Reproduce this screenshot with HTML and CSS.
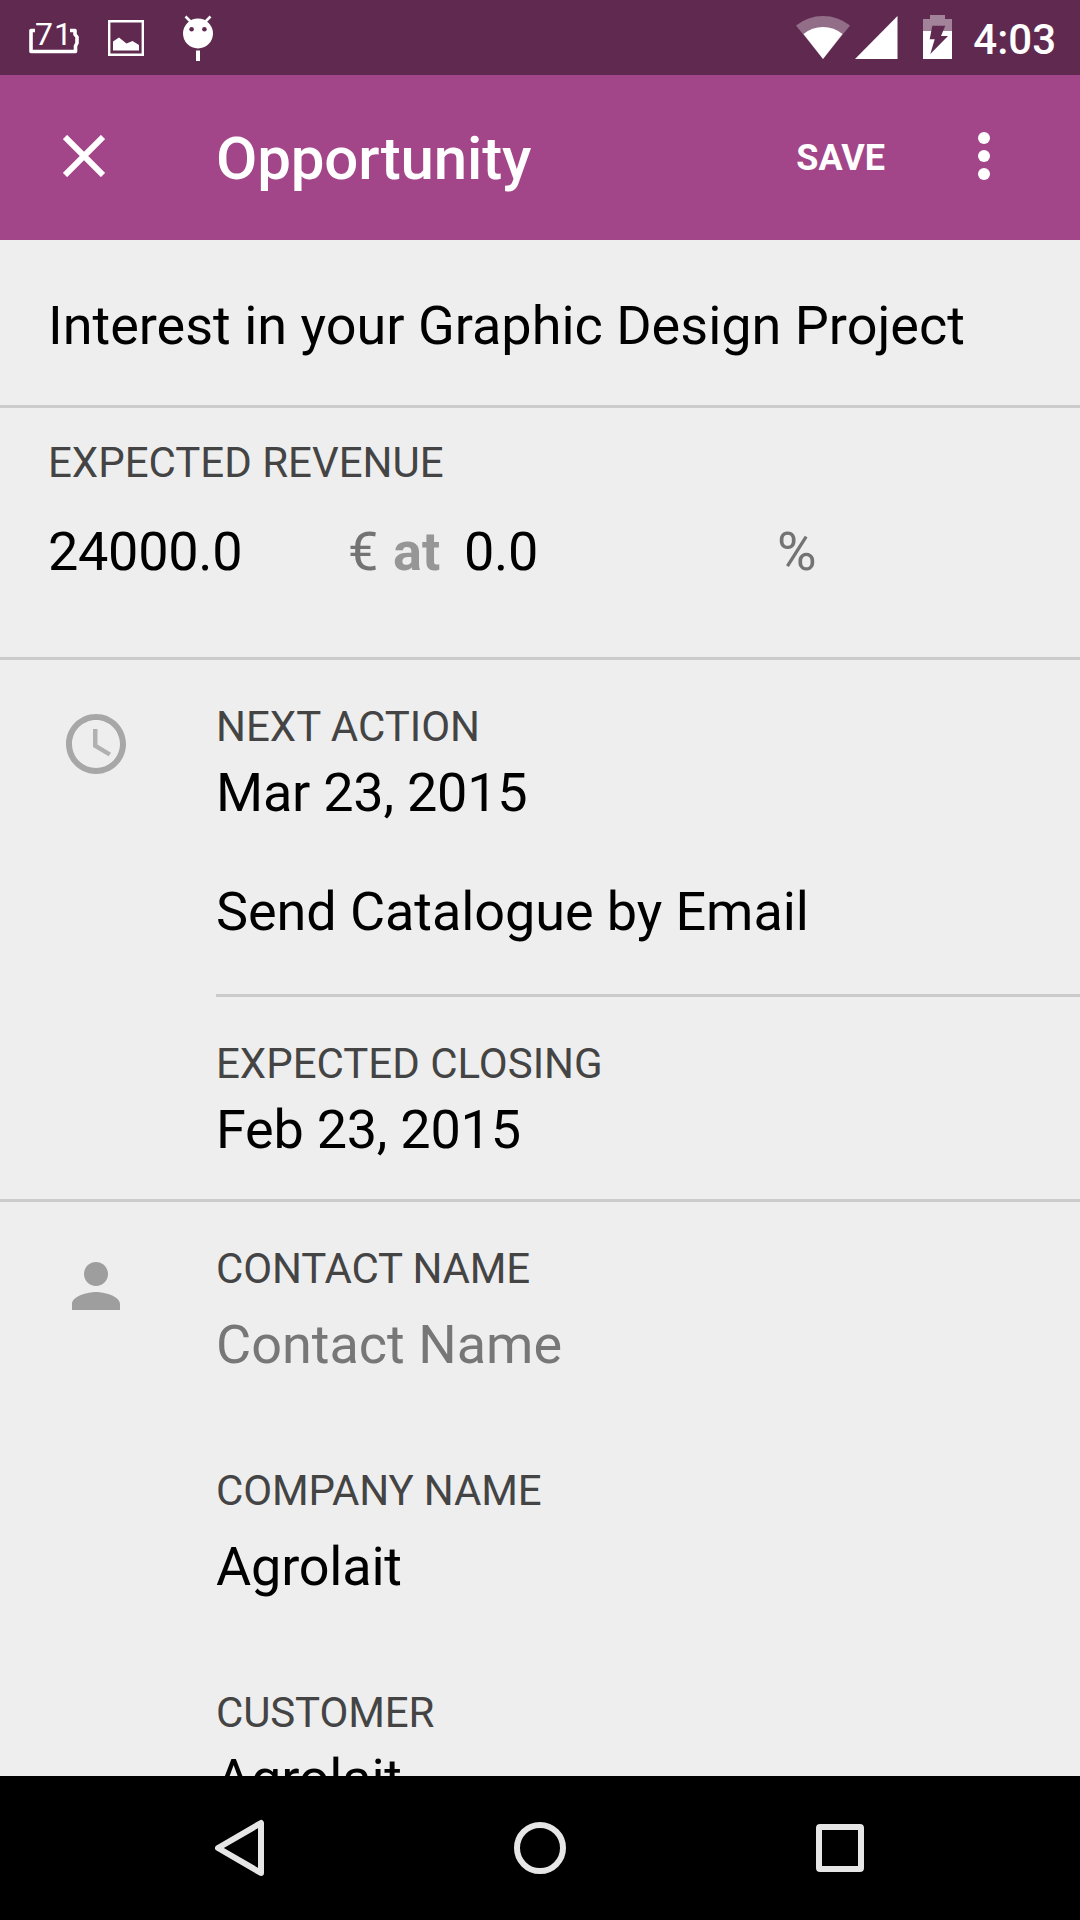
FILE: index.html
```html
<!DOCTYPE html>
<html lang="en">
<head>
<meta charset="utf-8">
<title>Opportunity</title>
<link rel="stylesheet" href="styles.css">
</head>
<body>
<div class="screen">
  <div class="status-bar">
    <div class="battery-level">
      <svg width="50" height="32" viewBox="0 0 50 32"><path d="M6 8.500H2V29.500H46.500V24L48 21V15L46 12.500V8.500H41" fill="none" stroke="#fff" stroke-width="3.600" stroke-linejoin="round"/></svg>
      <span class="battery-text">71</span>
    </div>
    <svg class="icon-picture" width="36" height="36" viewBox="0 0 36 36"><path d="M1.200 1.200H34.800V34.800H1.200Z" fill="none" stroke="#fff" stroke-width="2.400"/><path d="M5 30.500V21.500L11 17.500L18.500 23.500L24.500 21L31 25V30.500Z" fill="#fff"/></svg>
    <svg class="icon-droid" width="32" height="48" viewBox="0 0 32 48"><circle cx="16" cy="18.500" r="15" fill="#fff"/><path d="M8.500 6.500L3.500 1.500M23.500 6.500L28.500 1.500" stroke="#fff" stroke-width="2.600"/><circle cx="9.600" cy="14.300" r="2.300" fill="#602a50"/><circle cx="22.400" cy="14.300" r="2.300" fill="#602a50"/><path d="M14 35.500H18V46H14Z" fill="#fff"/></svg>
    <svg class="icon-wifi" width="54" height="44" viewBox="0 0 54 44"><path d="M27 44L0 10.500Q12 1 27 1T54 10.500Z" fill="#fff" opacity=".32"/><path d="M27 44L7.500 19Q16 12 27 12T46.500 19Z" fill="#fff"/></svg>
    <svg class="icon-signal" width="43" height="43" viewBox="0 0 43 43"><path d="M0 43L42.500 0V43Z" fill="#fff"/></svg>
    <svg class="icon-charge" width="29" height="44" viewBox="0 0 29 44"><path d="M0 16V4H7V0H22V4H29V16Z" fill="#fff" opacity=".42"/><path d="M0 16H29V44H0Z" fill="#fff"/><path d="M9.300 10.700H22.300L18 21H25L7.300 39L11.700 24.300H6.700Z" fill="#602a50"/></svg>
    <span class="clock">4:03</span>
  </div>

  <header class="app-bar">
    <svg class="icon-close" width="42" height="42" viewBox="0 0 42 42"><path d="M2 2L40 40M40 2L2 40" stroke="#fff" stroke-width="6"/></svg>
    <h1 class="app-title">Opportunity</h1>
    <span class="save">SAVE</span>
    <svg class="icon-more" width="12" height="48" viewBox="0 0 12 48" fill="#fff"><circle cx="6" cy="6" r="6"/><circle cx="6" cy="24" r="6"/><circle cx="6" cy="42" r="6"/></svg>
  </header>

  <main class="form">
    <section class="name-section"><div class="value">Interest in your Graphic Design Project</div></section>

    <section class="revenue-section">
      <div class="label">EXPECTED REVENUE</div>
      <div class="revenue-row">
        <span class="value number">24000.0</span>
        <span class="value unit">€</span>
        <span class="value at">at</span>
        <span class="value number">0.0</span>
        <span class="value unit">%</span>
      </div>
    </section>

    <section class="icon-section">
      <svg class="section-icon" width="72" height="72" viewBox="0 0 24 24" fill="#a7a7a7"><path d="M12 2C6.500 2 2 6.500 2 12s4.500 10 10 10 10-4.500 10-10S17.500 2 12 2zm0 18c-4.400 0-8-3.600-8-8s3.600-8 8-8 8 3.600 8 8-3.600 8-8 8z"/><path fill="#b1b1b1" d="M12.500 7H11v6l5.200 3.100.8-1.200-4.500-2.700z"/></svg>
      <div class="fields">
        <div class="field action-field">
          <div class="label">NEXT ACTION</div>
          <div class="value date">Mar 23, 2015</div>
          <div class="value summary">Send Catalogue by Email</div>
        </div>
        <div class="field closing-field">
          <div class="label">EXPECTED CLOSING</div>
          <div class="value date">Feb 23, 2015</div>
        </div>
      </div>
    </section>

    <section class="icon-section contact-section">
      <svg class="section-icon" width="72" height="72" viewBox="0 0 24 24" fill="#9e9e9e"><path d="M12 12c2.210 0 4-1.790 4-4s-1.790-4-4-4-4 1.790-4 4 1.790 4 4 4zm0 2c-2.670 0-8 1.340-8 4v2h16v-2c0-2.660-5.330-4-8-4z"/></svg>
      <div class="fields contact-fields">
        <div class="entry">
          <div class="label">CONTACT NAME</div>
          <div class="value placeholder">Contact Name</div>
        </div>
        <div class="entry">
          <div class="label">COMPANY NAME</div>
          <div class="value company">Agrolait</div>
        </div>
        <div class="entry customer">
          <div class="label">CUSTOMER</div>
          <div class="value company">Agrolait</div>
        </div>
      </div>
    </section>
  </main>

  <nav class="nav-bar">
    <svg width="60" height="60" viewBox="0 0 60 60"><path d="M51 5V55L8 30Z"/></svg>
    <svg width="60" height="60" viewBox="0 0 60 60"><circle cx="30" cy="30" r="23"/></svg>
    <svg width="60" height="60" viewBox="0 0 60 60"><rect x="9" y="9" width="42" height="42" rx="1"/></svg>
  </nav>
</div>
</body>
</html>
```
FILE: styles.css
```css
* { box-sizing: border-box; }

body {
  margin: 0;
  font-family: Roboto, "Liberation Sans", sans-serif;
}

svg { display: block; flex: none; }

.screen {
  width: 1080px;
  height: 1920px;
  display: flex;
  flex-direction: column;
  overflow: hidden;
  background: #eee;
}

.status-bar {
  flex: none;
  height: 75px;
  padding: 0 24px 0 29px;
  display: flex;
  align-items: flex-start;
  background: #602a50;
  color: #fff;
}

.battery-level {
  position: relative;
  width: 50px;
  margin-top: 22px;
}

.battery-text {
  position: absolute;
  left: 6px;
  top: -6px;
  font-size: 32px;
  line-height: 36px;
  font-weight: 400;
  letter-spacing: 1px;
}

.icon-picture { margin: 20px 0 0 29px; }
.icon-droid { margin: 15px 0 0 38px; }
.icon-wifi { margin: 15px 0 0 auto; }
.icon-signal { margin: 16px 0 0 5px; }
.icon-charge { margin: 15px 0 0 25px; }

.clock {
  margin: 15px 0 0 21px;
  font-size: 42px;
  line-height: 50px;
  font-weight: 500;
}

.app-bar {
  flex: none;
  height: 165px;
  padding: 0 90px 0 63px;
  display: flex;
  align-items: flex-start;
  background: #a24689;
  color: #fff;
}

.icon-close { margin-top: 60px; }

.app-title {
  flex: 1;
  margin: 49px 0 0 111px;
  font-size: 60px;
  line-height: 70px;
  font-weight: 500;
  letter-spacing: -0.15px;
}

.save {
  margin: 62px 93px 0 0;
  font-size: 36px;
  line-height: 42px;
  font-weight: 700;
}

.icon-more { margin-top: 57px; }

.form {
  flex: 1;
  min-height: 0;
  overflow: hidden;
}

.label {
  font-size: 42px;
  line-height: 50px;
  color: #444;
}

.value {
  font-size: 54px;
  line-height: 64px;
  color: #000;
  white-space: nowrap;
}

.name-section {
  height: 168px;
  padding: 54px 48px 0;
  border-bottom: 3px solid #cbcbcb;
}

.revenue-section {
  height: 252px;
  padding: 30px 48px 0;
  border-bottom: 3px solid #cbcbcb;
}

.revenue-row {
  margin-top: 32px;
  display: grid;
  grid-template-columns: 300px 45px 71px 313px 1fr;
}

.number { letter-spacing: -0.3px; }
.unit { color: #737373; }

.at {
  color: #969696;
  font-weight: 700;
}

.icon-section {
  display: flex;
  padding-left: 60px;
  border-bottom: 3px solid #cbcbcb;
}

.section-icon { margin-top: 48px; }

.fields {
  flex: 1;
  margin-left: 84px;
}

.field { padding-top: 42px; }

.date {
  margin-top: 9px;
  letter-spacing: -0.25px;
}

.summary {
  margin-top: 55px;
  letter-spacing: -0.08px;
}

.action-field {
  padding-bottom: 50px;
  border-bottom: 3px solid #cbcbcb;
}

.closing-field { padding-bottom: 37px; }

.contact-section { border-bottom: 0; }

.contact-fields {
  padding-top: 42px;
  display: flex;
  flex-direction: column;
  gap: 89px;
}

.entry {
  display: flex;
  flex-direction: column;
  gap: 19px;
}

.entry .label { letter-spacing: -0.15px; }
.company { letter-spacing: -0.2px; }
.customer { gap: 9px; }
.placeholder { color: #777; }

.nav-bar {
  flex: none;
  height: 144px;
  padding: 0 210px;
  display: flex;
  align-items: center;
  justify-content: space-between;
  background: #000;
  fill: none;
  stroke: #e6e6e6;
  stroke-width: 6;
  stroke-linejoin: round;
}
```
